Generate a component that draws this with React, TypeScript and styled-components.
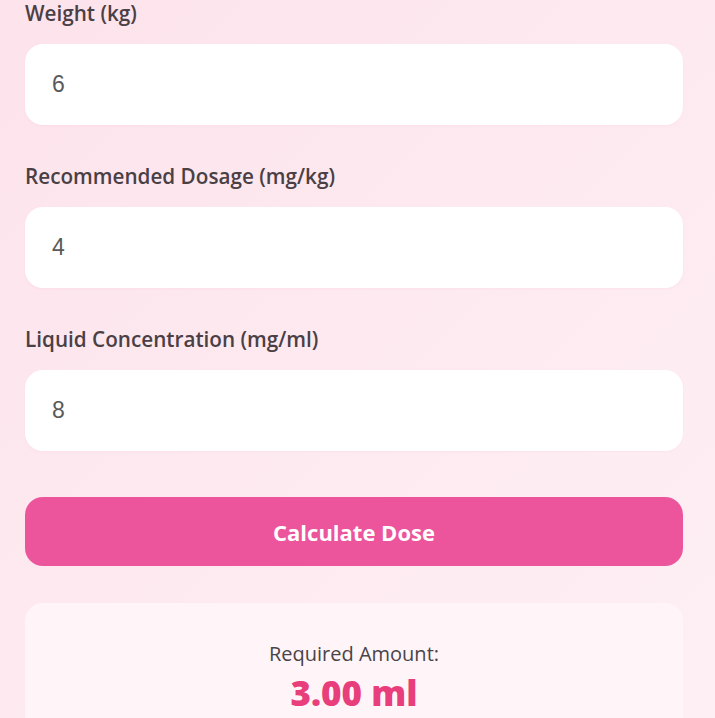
import { useState } from "react";
import styled, { createGlobalStyle } from "styled-components";

const GlobalStyle = createGlobalStyle`
  html, body {
    margin: 0;
    padding: 0;
  }
  body {
    font-family: "Open Sans", "Noto Sans", sans-serif;
    background: linear-gradient(135deg, #fde3eb 0%, #fdeaf0 50%, #fdf0f4 100%);
    min-height: 100vh;
  }
`;

const Page = styled.div`
  padding: 1px 32px 40px 25px;
  display: flex;
  flex-direction: column;
`;

const Field = styled.div`
  display: flex;
  flex-direction: column;
  margin-bottom: 39px;
`;

const Label = styled.label`
  font-size: 20.7px;
  line-height: 24px;
  font-weight: 600;
  color: #4a3f45;
  margin-bottom: 19px;
`;

const Input = styled.input`
  box-sizing: border-box;
  height: 81px;
  width: 100%;
  border: none;
  outline: none;
  border-radius: 18px;
  background: #ffffff;
  padding: 0 27px;
  font-family: "Liberation Sans", Arial, sans-serif;
  font-size: 23px;
  color: #5a5a5a;
  box-shadow: 0 1px 3px rgba(236, 85, 156, 0.05);
`;

const Button = styled.button`
  height: 69px;
  margin-top: 7px;
  border: none;
  border-radius: 18px;
  background: #ec559c;
  color: #ffffff;
  font-family: "Open Sans", "Noto Sans", sans-serif;
  font-size: 22px;
  font-weight: 700;
  cursor: pointer;
`;

const Result = styled.div`
  margin-top: 37px;
  border-radius: 18px;
  background: #fff5f8;
  padding: 38px 20px 30px;
  display: flex;
  flex-direction: column;
  align-items: center;
`;

const ResultLabel = styled.div`
  font-size: 20px;
  line-height: 26px;
  color: #4a4448;
  font-weight: 400;
`;

const ResultValue = styled.div`
  margin-top: 4px;
  font-size: 35px;
  line-height: 44px;
  font-weight: 800;
  color: #e83e7b;
`;

const fields = [
  { key: "weight", label: "Weight (kg)" },
  { key: "dosage", label: "Recommended Dosage (mg/kg)" },
  { key: "conc", label: "Liquid Concentration (mg/ml)" },
];

export default function App() {
  const [values, setValues] = useState<Record<string, string>>({
    weight: "6",
    dosage: "4",
    conc: "8",
  });
  const [result, setResult] = useState("3.00");

  const calculate = () => {
    const w = parseFloat(values.weight);
    const d = parseFloat(values.dosage);
    const c = parseFloat(values.conc);
    if (w && d && c) setResult(((w * d) / c).toFixed(2));
  };

  return (
    <>
      <GlobalStyle />
      <Page>
        {fields.map((f) => (
          <Field key={f.key}>
            <Label htmlFor={f.key}>{f.label}</Label>
            <Input
              id={f.key}
              type="number"
              value={values[f.key]}
              onChange={(e) => setValues({ ...values, [f.key]: e.target.value })}
            />
          </Field>
        ))}
        <Button onClick={calculate}>Calculate Dose</Button>
        <Result>
          <ResultLabel>Required Amount:</ResultLabel>
          <ResultValue>{result} ml</ResultValue>
        </Result>
      </Page>
    </>
  );
}
